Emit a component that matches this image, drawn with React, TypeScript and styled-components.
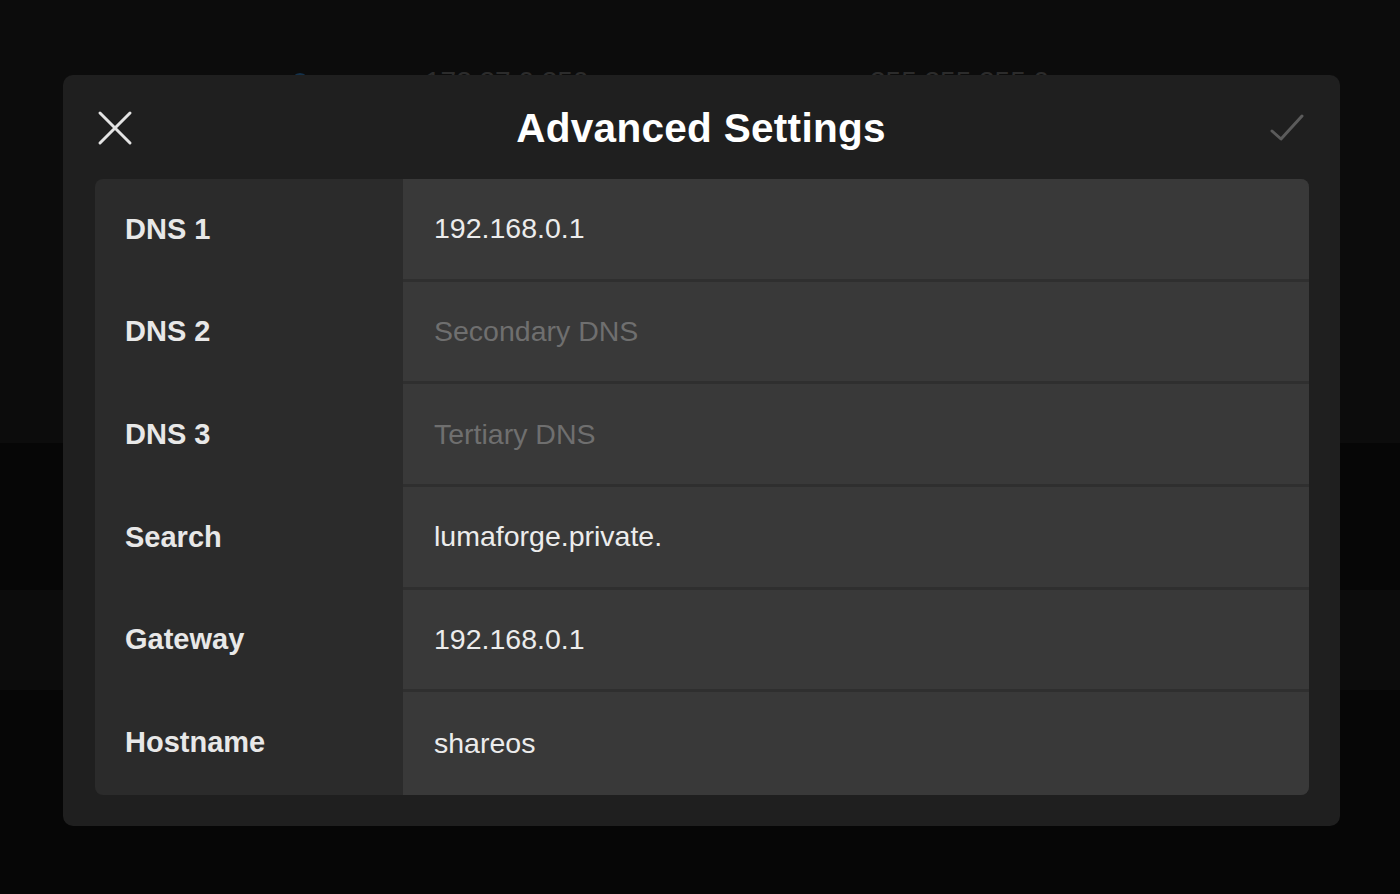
import React from 'react';
import styled, { createGlobalStyle } from 'styled-components';

const GlobalStyle = createGlobalStyle`
  html, body {
    margin: 0;
    padding: 0;
    background: #070707;
    font-family: "Liberation Sans", Arial, sans-serif;
    -webkit-font-smoothing: antialiased;
  }
`;

type Field = { label: string; value?: string; placeholder: string };

const fields: Field[] = [
  { label: 'DNS 1', value: '192.168.0.1', placeholder: 'Primary DNS' },
  { label: 'DNS 2', placeholder: 'Secondary DNS' },
  { label: 'DNS 3', placeholder: 'Tertiary DNS' },
  { label: 'Search', value: 'lumaforge.private.', placeholder: 'Search domain' },
  { label: 'Gateway', value: '192.168.0.1', placeholder: 'Gateway' },
  { label: 'Hostname', value: 'shareos', placeholder: 'Hostname' },
];

const bands = [
  { height: 443, light: true },
  { height: 147, light: false },
  { height: 100, light: true },
  { height: 204, light: false },
];

const CloseIcon = () => (
  <svg width="36" height="36" viewBox="0 0 36 36">
    <path d="M3 3 L33 33 M33 3 L3 33" stroke="#e4e4e4" strokeWidth="3" strokeLinecap="round" fill="none" />
  </svg>
);

const CheckIcon = () => (
  <svg width="36" height="32" viewBox="0 0 36 32">
    <path d="M3 19 L12 27 L33 4" stroke="#5b5b5b" strokeWidth="3" strokeLinecap="round" strokeLinejoin="round" fill="none" />
  </svg>
);

function App() {
  return (
    <>
      <GlobalStyle />
      <Screen>
        {bands.map((b, i) => (
          <Band key={i} $height={b.height} $light={b.light}>
            {i === 0 && (
              <PeekRow>
                <Dot />
                <PeekText $width={445}>172.27.0.250</PeekText>
                <PeekText $width={200}>255.255.255.0</PeekText>
              </PeekRow>
            )}
          </Band>
        ))}

        <Modal>
          <Header>
            <IconButton aria-label="Cancel">
              <CloseIcon />
            </IconButton>
            <Title>Advanced Settings</Title>
            <IconButton aria-label="Save">
              <CheckIcon />
            </IconButton>
          </Header>

          <Table>
            {fields.map((f, i) => (
              <Row key={f.label}>
                <Label>{f.label}</Label>
                <ValueCell $last={i === fields.length - 1}>
                  {f.value ? <Value>{f.value}</Value> : <Placeholder>{f.placeholder}</Placeholder>}
                </ValueCell>
              </Row>
            ))}
          </Table>
        </Modal>
      </Screen>
    </>
  );
}

const Screen = styled.div`
  position: relative;
  width: 1400px;
  height: 894px;
  overflow: hidden;
  display: flex;
  flex-direction: column;
`;

const Band = styled.div<{ $height: number; $light: boolean }>`
  flex: 0 0 ${p => p.$height}px;
  background: ${p => (p.$light ? '#0c0c0c' : '#060606')};
`;

const PeekRow = styled.div`
  display: flex;
  align-items: center;
  padding: 66px 0 0 291px;
  height: 32px;
`;

const Dot = styled.div`
  width: 18px;
  height: 18px;
  border-radius: 50%;
  background: #14314a;
  margin-right: 116px;
`;

const PeekText = styled.div<{ $width: number }>`
  width: ${p => p.$width}px;
  font-size: 28px;
  color: #2c2c2c;
`;

const Modal = styled.div`
  position: absolute;
  left: 63px;
  top: 75px;
  width: 1277px;
  height: 751px;
  box-sizing: border-box;
  padding: 0 31px 31px 32px;
  background: #1f1f1f;
  border-radius: 10px;
  display: flex;
  flex-direction: column;
`;

const Header = styled.div`
  height: 104px;
  display: flex;
  align-items: center;
  justify-content: space-between;
  padding: 2px 4px 0 2px;
  box-sizing: border-box;
`;

const IconButton = styled.button`
  border: 0;
  padding: 0;
  background: none;
  display: flex;
  align-items: center;
  justify-content: center;
  width: 36px;
  height: 36px;
  cursor: pointer;
`;

const Title = styled.h1`
  margin: 0;
  font-size: 40.5px;
  font-weight: 700;
  color: #ffffff;
  letter-spacing: 0.3px;
`;

const Table = styled.div`
  flex: 1;
  display: grid;
  grid-auto-rows: 1fr;
  border-radius: 8px;
  overflow: hidden;
  background: #2b2b2b;
`;

const Row = styled.div`
  display: grid;
  grid-template-columns: 308px 1fr;
`;

const Label = styled.div`
  display: flex;
  align-items: center;
  padding-left: 30px;
  padding-bottom: 2px;
  font-size: 29px;
  font-weight: 700;
  color: #e8e8e8;
`;

const ValueCell = styled.div<{ $last: boolean }>`
  display: flex;
  align-items: center;
  padding-left: 31px;
  background: #393939;
  border-bottom: ${p => (p.$last ? 'none' : '3px solid #2f2f2f')};
`;

const Value = styled.span`
  font-size: 28.5px;
  color: #ececec;
`;

const Placeholder = styled.span`
  font-size: 28.5px;
  color: #6f6f6f;
`;

export default App;
